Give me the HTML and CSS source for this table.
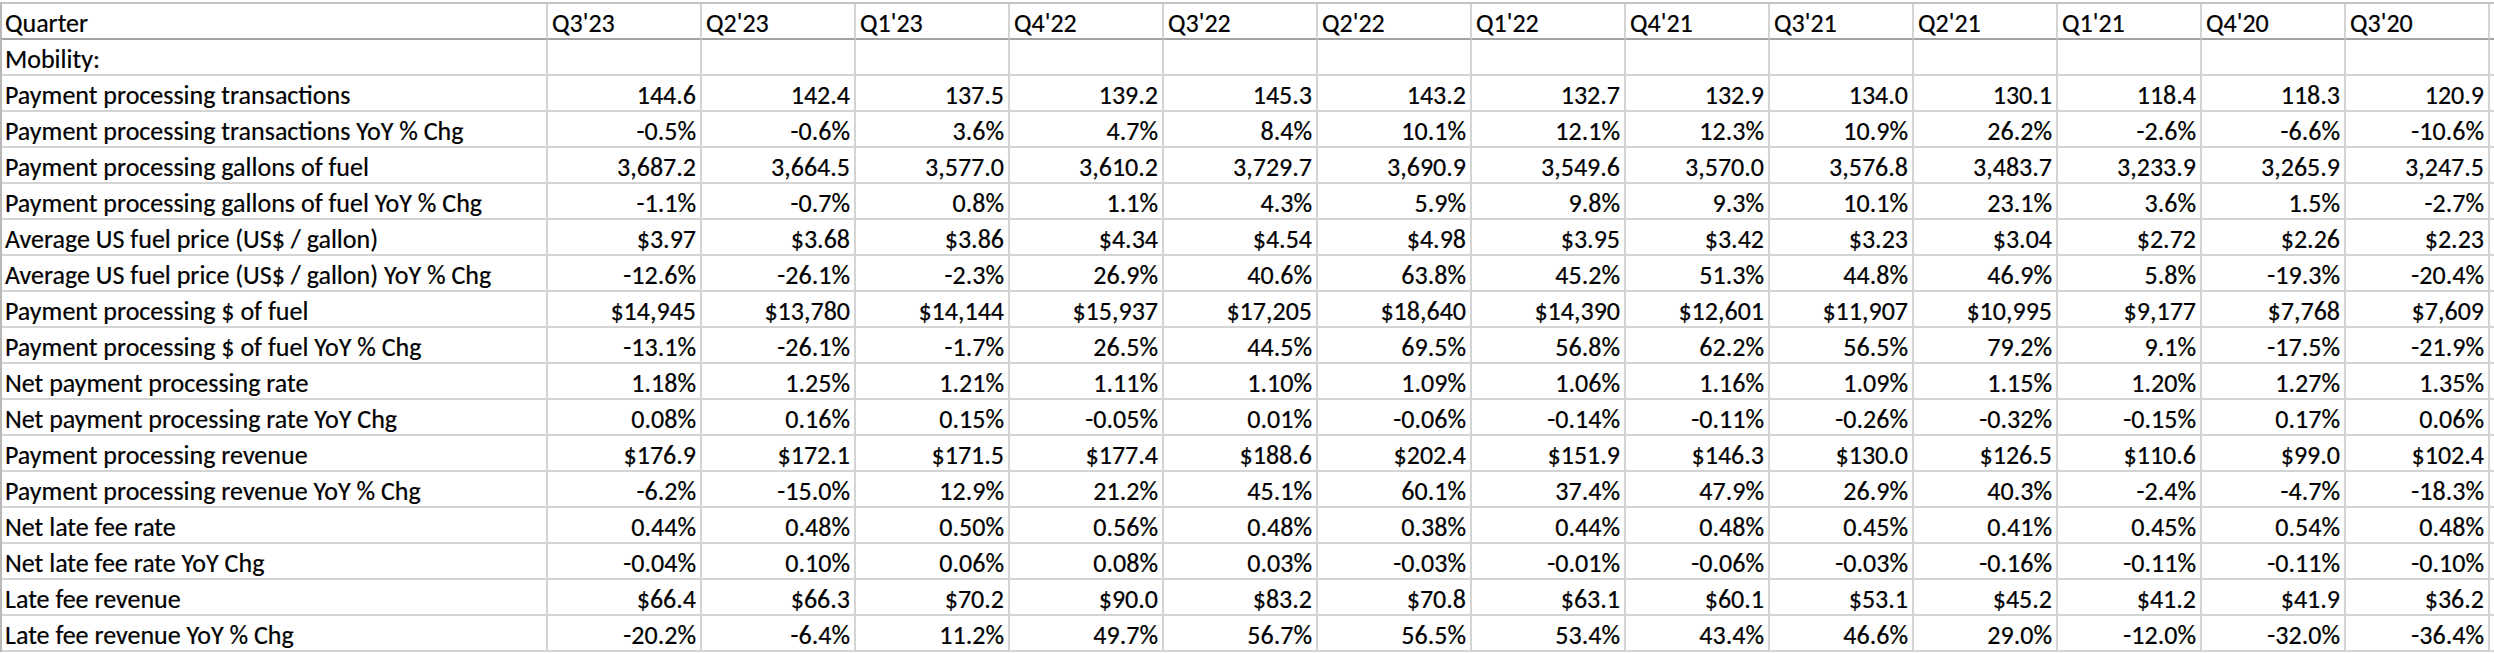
FILE: index.html
```html
<!DOCTYPE html>
<html lang="en">
<head>
<meta charset="utf-8">
<title>Mobility KPIs</title>
<link rel="stylesheet" href="styles.css">
</head>
<body>
<div class="sheet">
  <div class="row head"><div class="c lbl">Quarter</div><div class="c q">Q3'23</div><div class="c q">Q2'23</div><div class="c q">Q1'23</div><div class="c q">Q4'22</div><div class="c q">Q3'22</div><div class="c q">Q2'22</div><div class="c q">Q1'22</div><div class="c q">Q4'21</div><div class="c q">Q3'21</div><div class="c q">Q2'21</div><div class="c q">Q1'21</div><div class="c q">Q4'20</div><div class="c q">Q3'20</div><div class="c pad"></div></div>
  <div class="row"><div class="c lbl">Mobility:</div><div class="c"></div><div class="c"></div><div class="c"></div><div class="c"></div><div class="c"></div><div class="c"></div><div class="c"></div><div class="c"></div><div class="c"></div><div class="c"></div><div class="c"></div><div class="c"></div><div class="c"></div><div class="c pad"></div></div>
  <div class="row"><div class="c lbl">Payment processing transactions</div><div class="c n">144.6</div><div class="c n">142.4</div><div class="c n">137.5</div><div class="c n">139.2</div><div class="c n">145.3</div><div class="c n">143.2</div><div class="c n">132.7</div><div class="c n">132.9</div><div class="c n">134.0</div><div class="c n">130.1</div><div class="c n">118.4</div><div class="c n">118.3</div><div class="c n">120.9</div><div class="c pad"></div></div>
  <div class="row"><div class="c lbl">Payment processing transactions YoY % Chg</div><div class="c n">-0.5%</div><div class="c n">-0.6%</div><div class="c n">3.6%</div><div class="c n">4.7%</div><div class="c n">8.4%</div><div class="c n">10.1%</div><div class="c n">12.1%</div><div class="c n">12.3%</div><div class="c n">10.9%</div><div class="c n">26.2%</div><div class="c n">-2.6%</div><div class="c n">-6.6%</div><div class="c n">-10.6%</div><div class="c pad"></div></div>
  <div class="row"><div class="c lbl">Payment processing gallons of fuel</div><div class="c n">3,687.2</div><div class="c n">3,664.5</div><div class="c n">3,577.0</div><div class="c n">3,610.2</div><div class="c n">3,729.7</div><div class="c n">3,690.9</div><div class="c n">3,549.6</div><div class="c n">3,570.0</div><div class="c n">3,576.8</div><div class="c n">3,483.7</div><div class="c n">3,233.9</div><div class="c n">3,265.9</div><div class="c n">3,247.5</div><div class="c pad"></div></div>
  <div class="row"><div class="c lbl">Payment processing gallons of fuel YoY % Chg</div><div class="c n">-1.1%</div><div class="c n">-0.7%</div><div class="c n">0.8%</div><div class="c n">1.1%</div><div class="c n">4.3%</div><div class="c n">5.9%</div><div class="c n">9.8%</div><div class="c n">9.3%</div><div class="c n">10.1%</div><div class="c n">23.1%</div><div class="c n">3.6%</div><div class="c n">1.5%</div><div class="c n">-2.7%</div><div class="c pad"></div></div>
  <div class="row"><div class="c lbl">Average US fuel price (US$ / gallon)</div><div class="c n">$3.97</div><div class="c n">$3.68</div><div class="c n">$3.86</div><div class="c n">$4.34</div><div class="c n">$4.54</div><div class="c n">$4.98</div><div class="c n">$3.95</div><div class="c n">$3.42</div><div class="c n">$3.23</div><div class="c n">$3.04</div><div class="c n">$2.72</div><div class="c n">$2.26</div><div class="c n">$2.23</div><div class="c pad"></div></div>
  <div class="row"><div class="c lbl">Average US fuel price (US$ / gallon) YoY % Chg</div><div class="c n">-12.6%</div><div class="c n">-26.1%</div><div class="c n">-2.3%</div><div class="c n">26.9%</div><div class="c n">40.6%</div><div class="c n">63.8%</div><div class="c n">45.2%</div><div class="c n">51.3%</div><div class="c n">44.8%</div><div class="c n">46.9%</div><div class="c n">5.8%</div><div class="c n">-19.3%</div><div class="c n">-20.4%</div><div class="c pad"></div></div>
  <div class="row"><div class="c lbl">Payment processing $ of fuel</div><div class="c n">$14,945</div><div class="c n">$13,780</div><div class="c n">$14,144</div><div class="c n">$15,937</div><div class="c n">$17,205</div><div class="c n">$18,640</div><div class="c n">$14,390</div><div class="c n">$12,601</div><div class="c n">$11,907</div><div class="c n">$10,995</div><div class="c n">$9,177</div><div class="c n">$7,768</div><div class="c n">$7,609</div><div class="c pad"></div></div>
  <div class="row"><div class="c lbl">Payment processing $ of fuel YoY % Chg</div><div class="c n">-13.1%</div><div class="c n">-26.1%</div><div class="c n">-1.7%</div><div class="c n">26.5%</div><div class="c n">44.5%</div><div class="c n">69.5%</div><div class="c n">56.8%</div><div class="c n">62.2%</div><div class="c n">56.5%</div><div class="c n">79.2%</div><div class="c n">9.1%</div><div class="c n">-17.5%</div><div class="c n">-21.9%</div><div class="c pad"></div></div>
  <div class="row"><div class="c lbl">Net payment processing rate</div><div class="c n">1.18%</div><div class="c n">1.25%</div><div class="c n">1.21%</div><div class="c n">1.11%</div><div class="c n">1.10%</div><div class="c n">1.09%</div><div class="c n">1.06%</div><div class="c n">1.16%</div><div class="c n">1.09%</div><div class="c n">1.15%</div><div class="c n">1.20%</div><div class="c n">1.27%</div><div class="c n">1.35%</div><div class="c pad"></div></div>
  <div class="row"><div class="c lbl">Net payment processing rate YoY Chg</div><div class="c n">0.08%</div><div class="c n">0.16%</div><div class="c n">0.15%</div><div class="c n">-0.05%</div><div class="c n">0.01%</div><div class="c n">-0.06%</div><div class="c n">-0.14%</div><div class="c n">-0.11%</div><div class="c n">-0.26%</div><div class="c n">-0.32%</div><div class="c n">-0.15%</div><div class="c n">0.17%</div><div class="c n">0.06%</div><div class="c pad"></div></div>
  <div class="row"><div class="c lbl">Payment processing revenue</div><div class="c n">$176.9</div><div class="c n">$172.1</div><div class="c n">$171.5</div><div class="c n">$177.4</div><div class="c n">$188.6</div><div class="c n">$202.4</div><div class="c n">$151.9</div><div class="c n">$146.3</div><div class="c n">$130.0</div><div class="c n">$126.5</div><div class="c n">$110.6</div><div class="c n">$99.0</div><div class="c n">$102.4</div><div class="c pad"></div></div>
  <div class="row"><div class="c lbl">Payment processing revenue YoY % Chg</div><div class="c n">-6.2%</div><div class="c n">-15.0%</div><div class="c n">12.9%</div><div class="c n">21.2%</div><div class="c n">45.1%</div><div class="c n">60.1%</div><div class="c n">37.4%</div><div class="c n">47.9%</div><div class="c n">26.9%</div><div class="c n">40.3%</div><div class="c n">-2.4%</div><div class="c n">-4.7%</div><div class="c n">-18.3%</div><div class="c pad"></div></div>
  <div class="row"><div class="c lbl">Net late fee rate</div><div class="c n">0.44%</div><div class="c n">0.48%</div><div class="c n">0.50%</div><div class="c n">0.56%</div><div class="c n">0.48%</div><div class="c n">0.38%</div><div class="c n">0.44%</div><div class="c n">0.48%</div><div class="c n">0.45%</div><div class="c n">0.41%</div><div class="c n">0.45%</div><div class="c n">0.54%</div><div class="c n">0.48%</div><div class="c pad"></div></div>
  <div class="row"><div class="c lbl">Net late fee rate YoY Chg</div><div class="c n">-0.04%</div><div class="c n">0.10%</div><div class="c n">0.06%</div><div class="c n">0.08%</div><div class="c n">0.03%</div><div class="c n">-0.03%</div><div class="c n">-0.01%</div><div class="c n">-0.06%</div><div class="c n">-0.03%</div><div class="c n">-0.16%</div><div class="c n">-0.11%</div><div class="c n">-0.11%</div><div class="c n">-0.10%</div><div class="c pad"></div></div>
  <div class="row"><div class="c lbl">Late fee revenue</div><div class="c n">$66.4</div><div class="c n">$66.3</div><div class="c n">$70.2</div><div class="c n">$90.0</div><div class="c n">$83.2</div><div class="c n">$70.8</div><div class="c n">$63.1</div><div class="c n">$60.1</div><div class="c n">$53.1</div><div class="c n">$45.2</div><div class="c n">$41.2</div><div class="c n">$41.9</div><div class="c n">$36.2</div><div class="c pad"></div></div>
  <div class="row"><div class="c lbl">Late fee revenue YoY % Chg</div><div class="c n">-20.2%</div><div class="c n">-6.4%</div><div class="c n">11.2%</div><div class="c n">49.7%</div><div class="c n">56.7%</div><div class="c n">56.5%</div><div class="c n">53.4%</div><div class="c n">43.4%</div><div class="c n">46.6%</div><div class="c n">29.0%</div><div class="c n">-12.0%</div><div class="c n">-32.0%</div><div class="c n">-36.4%</div><div class="c pad"></div></div>
</div>
</body>
</html>
```

FILE: styles.css
```css
html, body {
  margin: 0;
  padding: 0;
  background: #ffffff;
}

body {
  font-family: Carlito, Calibri, "Liberation Sans", sans-serif;
  font-size: 26px;
  color: #000000;
  overflow: hidden;
}

.sheet {
  margin-top: 2px;
  border-top: 2px solid #c4c4c4;
  border-left: 2px solid #b8b8b8;
  width: 2492px;
}

.row {
  display: grid;
  grid-template-columns: 546px repeat(7, 154px) repeat(6, 144px) 4px;
  height: 36px;
}

.c {
  box-sizing: border-box;
  height: 36px;
  border-right: 2px solid #d4d4d4;
  border-bottom: 2px solid #d4d4d4;
  display: flex;
  align-items: flex-end;
  line-height: 1;
  padding: 0 4px 2px 4px;
  white-space: nowrap;
  overflow: hidden;
  -webkit-text-stroke: 0.2px #000000;
}

.c.lbl {
  padding-left: 3px;
}

.head .c {
  border-bottom-color: #a3a3a3;
}

.c.n {
  justify-content: flex-end;
}

.c.pad {
  border-right: none;
  padding: 0;
}
```
